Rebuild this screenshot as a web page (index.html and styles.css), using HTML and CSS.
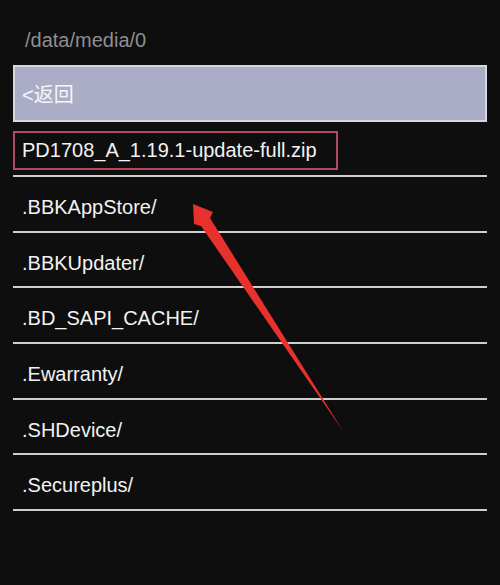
FILE: index.html
```html
<!DOCTYPE html>
<html lang="zh">
<head>
<meta charset="utf-8">
<title>/data/media/0</title>
<link rel="stylesheet" href="styles.css">
</head>
<body>
<div class="screen">
  <div class="path">/data/media/0</div>
  <div class="back">&lt;返回</div>
  <ul class="list">
    <li class="row row-first"><span class="mark">PD1708_A_1.19.1-update-full.zip</span></li>
    <li class="row">.BBKAppStore/</li>
    <li class="row">.BBKUpdater/</li>
    <li class="row">.BD_SAPI_CACHE/</li>
    <li class="row">.Ewarranty/</li>
    <li class="row">.SHDevice/</li>
    <li class="row">.Secureplus/</li>
  </ul>
  <svg class="arrow" width="500" height="585" viewBox="0 0 500 585" aria-hidden="true">
    <polygon points="193,204 213,212 210,218 343,431 201,226 194,224" fill="#e8302c"/>
  </svg>
</div>
</body>
</html>
```

FILE: styles.css
```css
html, body {
  margin: 0;
  padding: 0;
  background: #0e0e0e;
}

body {
  font-family: "Liberation Sans", Arial, "Noto Sans CJK SC", sans-serif;
  color: #f2f2f2;
}

.screen {
  position: relative;
  width: 500px;
  height: 585px;
  padding: 0 13px;
  box-sizing: border-box;
  overflow: hidden;
}

.path {
  padding: 29px 0 0 12px;
  height: 36px;
  line-height: 22px;
  font-size: 20px;
  color: #8e8e92;
}

.back {
  display: flex;
  align-items: center;
  height: 53px;
  padding-left: 7px;
  background: #abadc6;
  border: 2px solid #d6d7e3;
  font-size: 20px;
  color: #f6f6f8;
  font-family: "Liberation Sans", "Noto Sans CJK SC", sans-serif;
}

.list {
  list-style: none;
  margin: 0;
  padding: 0;
}

.row {
  height: 46.67px;
  line-height: 46.67px;
  padding: 7px 0 0 9px;
  border-bottom: 2px solid #cfcfcf;
  font-size: 20px;
  color: #f2f2f2;
  white-space: nowrap;
}

.row-first {
  height: 39px;
  line-height: normal;
  padding: 9px 0 5px 0;
  display: flex;
  align-items: flex-start;
}

.mark {
  display: inline-flex;
  align-items: center;
  box-sizing: border-box;
  height: 39px;
  padding: 0 19px 0 7px;
  border: 2px solid #b4485e;
}

.arrow {
  position: absolute;
  left: 0;
  top: 0;
  pointer-events: none;
}
```
